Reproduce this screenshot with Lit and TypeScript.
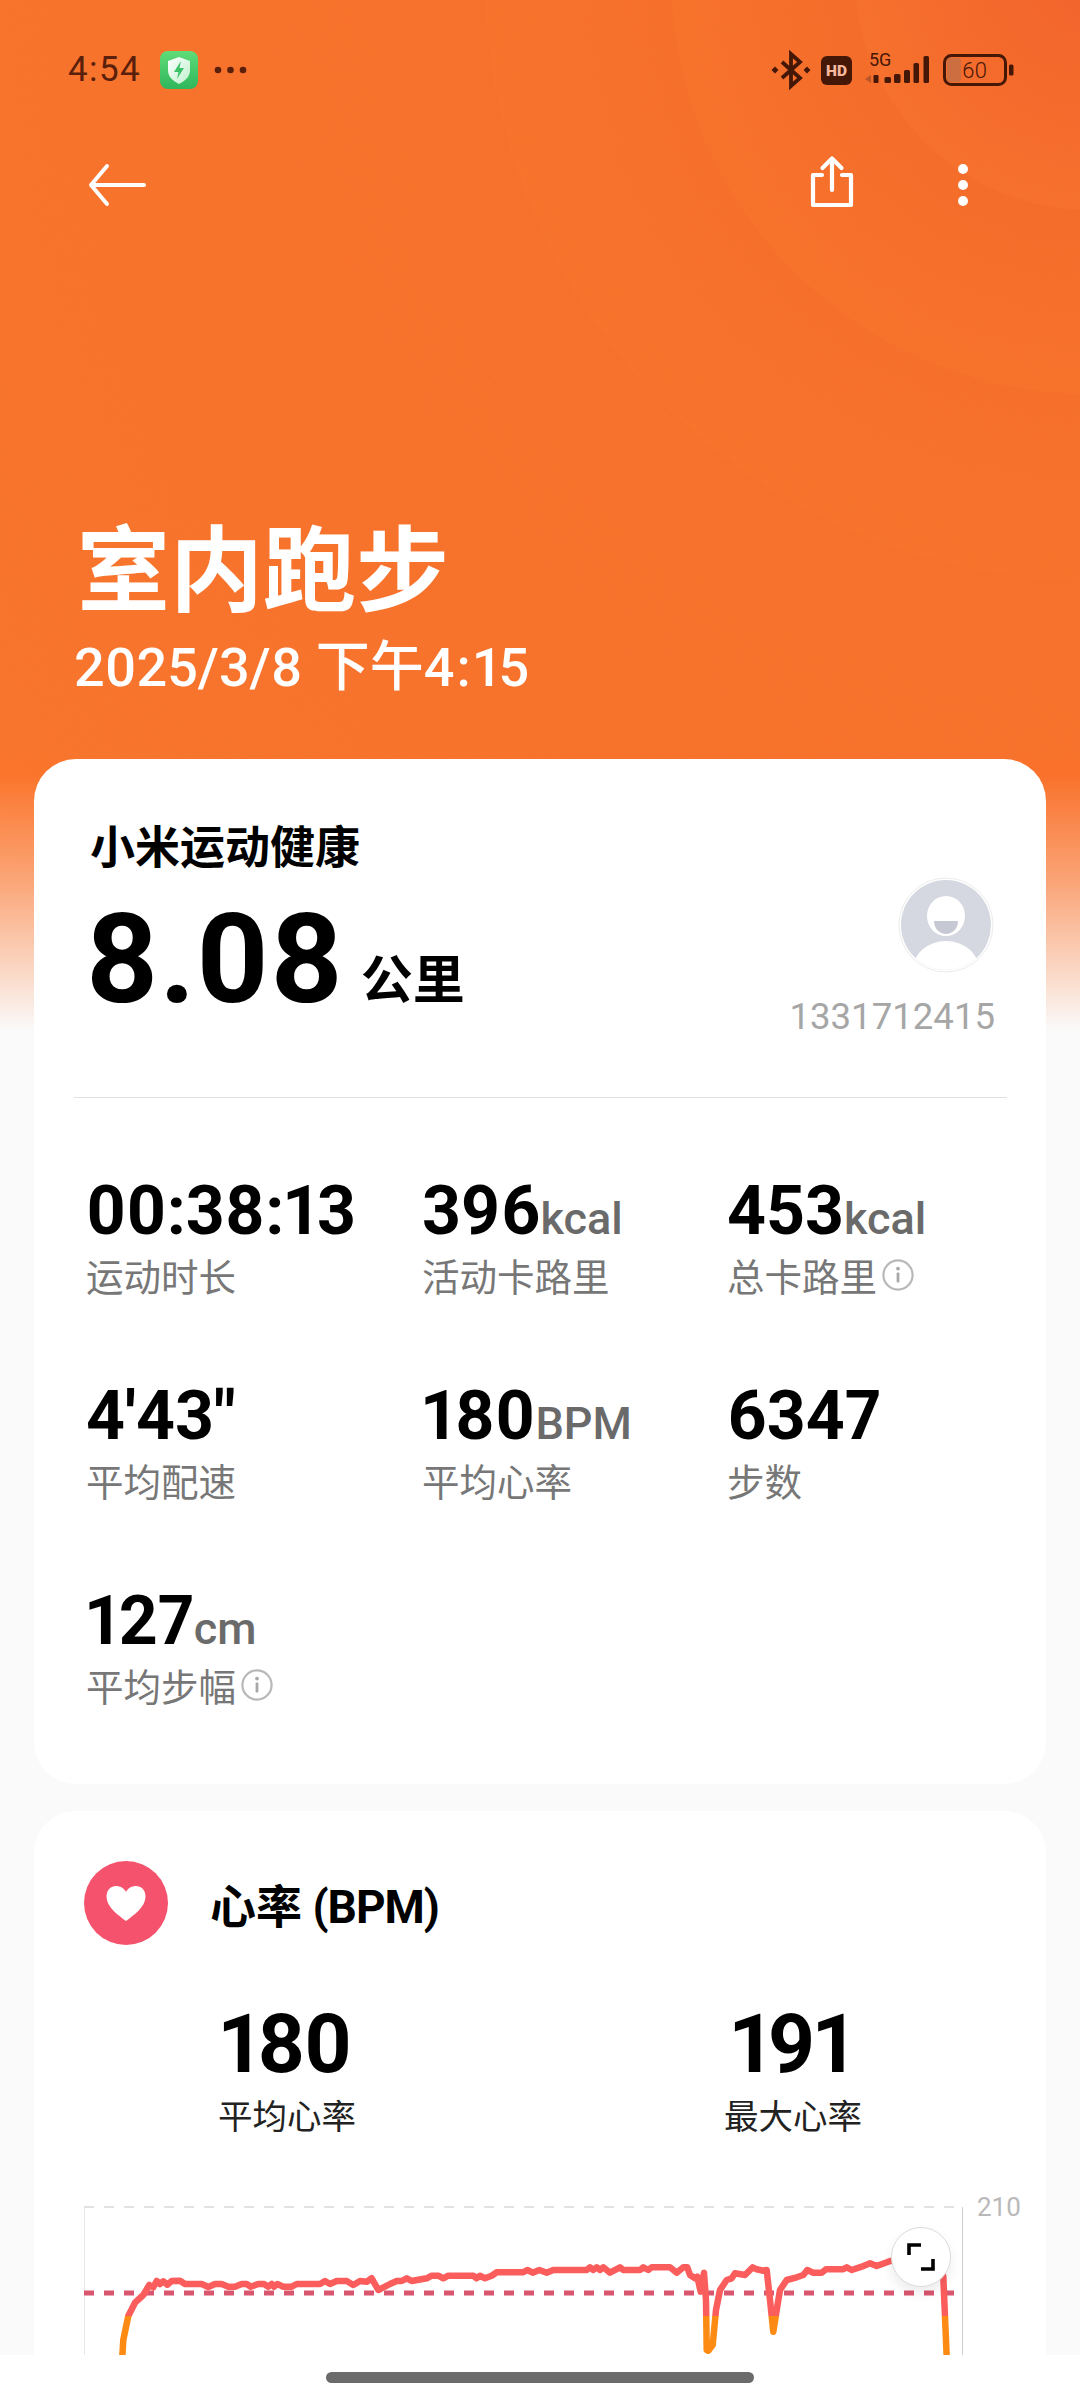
import { LitElement, html, css, svg, unsafeCSS } from "lit";
import { customElement } from "lit/decorators.js";

const z7: [number, number][] = [[187,530],[190,480],[205,408],[225,368],[250,345],[268,315],[280,322],[290,303],[300,312],[310,304],[322,314],[335,303],[360,302],[375,312],[425,312],[445,321],[465,312],[485,312],[505,320],[525,320],[545,312],[560,312],[572,320],[595,312],[612,312],[625,320],[635,312],[642,320],[652,312],[670,320],[695,320],[710,312],[780,312],[795,303],[810,312],[830,303],[860,303],[880,315],[900,303],[920,305],[935,295],[955,330],[975,320],[990,312],[1010,303],[1025,303],[1040,295],[1055,303],[1100,295],[1115,287],[1135,287],[1150,295],[1165,287],[1240,287],[1250,295],[1260,287],[1275,295],[1295,287],[1310,277],[1390,277],[1402,270],[1418,278],[1438,270],[1460,278],[1480,270]];
const z8: [number, number][] = [[0,270],[20,270],[30,262],[40,270],[50,262],[60,270],[70,262],[90,278],[120,262],[130,270],[180,270],[190,262],[205,270],[215,262],[270,262],[290,278],[310,262],[322,262],[330,285],[345,295],[352,290],[362,335],[372,278],[378,360],[380,510],[385,512],[398,495],[408,390],[420,330],[440,300],[455,295],[465,280],[495,285],[518,262],[530,268],[550,272],[560,270],[570,360],[580,455],[590,390],[600,330],[620,300],[650,292],[670,285],[682,270],[700,278],[725,278],[738,268],[790,268],[800,262],[815,270],[845,260],[870,250],[890,258],[925,245],[1000,225],[1085,270],[1090,290],[1100,530]];
const linePoints = [
  ...z7.map(([x, y]) => `${(60 + x / 3).toFixed(1)},${(2180 + y / 3).toFixed(1)}`),
  ...z8.map(([x, y]) => `${(580 + x / 3).toFixed(1)},${(2180 + y / 3).toFixed(1)}`),
].join(" ");

const noise = unsafeCSS(
  `url("data:image/svg+xml,%3Csvg xmlns='http://www.w3.org/2000/svg' width='240' height='240'%3E%3Cfilter id='n'%3E%3CfeTurbulence type='fractalNoise' baseFrequency='.9' numOctaves='2'/%3E%3CfeColorMatrix values='0 0 0 0 .45 0 0 0 0 .2 0 0 0 0 .05 0 0 0 .35 -.06'/%3E%3C/filter%3E%3Crect width='240' height='240' filter='url(%23n)' opacity='.35'/%3E%3C/svg%3E")`
);

const stats = [
  { v: "00:38:13", l: "运动时长" },
  { v: "396", u: "kcal", l: "活动卡路里" },
  { v: "453", u: "kcal", l: "总卡路里", info: true },
  { v: "4'43\"", l: "平均配速" },
  { v: "180", u: "BPM", l: "平均心率" },
  { v: "6347", l: "步数" },
  { v: "127", u: "cm", l: "平均步幅", info: true },
];

const infoIcon = html`<svg class="info" viewBox="0 0 32 32" aria-hidden="true">
  <circle cx="16" cy="16" r="14.6" fill="none" stroke="#b8b8b8" stroke-width="2.2" />
  <circle cx="16" cy="9.6" r="1.9" fill="#a8a8a8" />
  <rect x="14.6" y="13.5" width="2.8" height="10" rx="1" fill="#a8a8a8" />
</svg>`;

@customElement("app-root")
export class AppRoot extends LitElement {
  static styles = css`
    :host {
      display: block;
      font-family: Roboto, "Noto Sans CJK SC", sans-serif;
      font-variant-numeric: proportional-nums;
    }
    .page {
      width: 1080px;
      height: 2400px;
      display: flex;
      flex-direction: column;
      overflow: hidden;
      background-color: #fafafa;
      background-image:
        linear-gradient(180deg, rgba(250, 250, 250, 0) 775px, rgba(250, 250, 250, 0.36) 880px, rgba(250, 250, 250, 0.78) 980px, #fafafa 1030px),
        radial-gradient(
          circle at 1090px -25px,
          #f5622a 0,
          #f9702c 234px,
          #f76c29 236px,
          #fa722b 418px,
          #f86f2a 420px,
          #fa732c 604px,
          #f9712b 606px,
          #fa722b 900px,
          #fb752c 1400px
        );
      background-repeat: no-repeat;
      background-size: 100% 1030px;
    }
    .scroll {
      flex: 1;
      min-height: 0;
      overflow: hidden;
    }
    .home {
      height: 45px;
      flex: none;
      background: #fff;
      display: flex;
      justify-content: center;
      padding-top: 17px;
      box-sizing: border-box;
    }
    .home i {
      display: block;
      width: 428px;
      height: 11px;
      border-radius: 6px;
      background: #6b6b6b;
    }

    .header {
      height: 759px;
      box-sizing: border-box;
      padding-top: 50px;
      background-image: ${noise};
    }
    .status {
      height: 40px;
      display: flex;
      align-items: center;
      padding: 0 66px 0 68px;
      color: #5a200b;
    }
    .time {
      font-size: 35px;
      letter-spacing: 1.4px;
      line-height: 40px;
      width: 92px;
    }
    .shield {
      width: 38px;
      height: 38px;
      flex: none;
    }
    .more {
      width: 36px;
      height: 10px;
      margin-left: 15px;
      flex: none;
    }
    .status-right {
      margin-left: auto;
      display: flex;
      align-items: center;
    }
    .status-right svg {
      overflow: visible;
    }
    .bt {
      width: 38px;
      height: 38px;
      margin-right: 11px;
    }
    .hd {
      width: 31px;
      height: 29px;
      margin-right: 17px;
    }
    .sig {
      width: 70px;
      height: 34px;
      margin-right: 4px;
    }
    .bat {
      width: 71px;
      height: 32px;
    }
    .toolbar {
      height: 60px;
      margin-top: 65px;
      display: flex;
      align-items: center;
      padding: 0 111px 0 88px;
    }
    .back {
      width: 58px;
      height: 44px;
    }
    .share {
      width: 46px;
      height: 54px;
      margin-left: auto;
      margin-top: -8px;
    }
    .kebab {
      width: 12px;
      height: 46px;
      margin-left: 102px;
    }
    .title {
      margin: 299px 0 0 77px;
      font-size: 93px;
      line-height: 100px;
      font-weight: 700;
      color: #fff;
      font-family: "Noto Sans CJK SC", sans-serif;
    }
    .date {
      margin: 24px 0 0 74px;
      font-size: 54px;
      line-height: 60px;
      font-weight: 500;
      color: #fff;
    }
    .date span {
      padding: 0 3px 0 2px;
    }

    .card {
      width: 1012px;
      margin-left: 34px;
      background: #fff;
      border-radius: 42px;
      box-sizing: border-box;
    }
    .main {
      height: 1025px;
      padding-top: 56px;
    }
    .head {
      display: flex;
      justify-content: space-between;
      padding: 0 51px 0 56px;
    }
    .brand {
      font-size: 45px;
      line-height: 60px;
      font-weight: 700;
      color: #000;
      font-family: "Noto Sans CJK SC", sans-serif;
    }
    .dist {
      margin: 22px 0 0 -5px;
      font-size: 125px;
      line-height: 125px;
      font-weight: 700;
      color: #000;
      white-space: nowrap;
    }
    .dist span {
      font-size: 52px;
      margin-left: 17px;
      line-height: 0;
      vertical-align: 3px;
      font-family: "Noto Sans CJK SC", sans-serif;
    }
    .who {
      padding-top: 62px;
      display: flex;
      flex-direction: column;
      align-items: flex-end;
    }
    .avatar {
      width: 96px;
      height: 96px;
      margin-right: 1px;
    }
    .uid {
      margin-top: 22px;
      font-size: 36.6px;
      line-height: 44px;
      color: #a6a6a6;
      font-variant-numeric: tabular-nums;
    }
    .rule {
      height: 1px;
      margin: 58px 39px 0 40px;
      background: #e0e0e0;
    }
    .grid {
      display: grid;
      grid-template-columns: 336px 305px 1fr;
      row-gap: 85px;
      padding: 79px 0 0 52px;
    }
    .val {
      font-size: 68px;
      line-height: 68px;
      font-weight: 700;
      color: #000;
      white-space: nowrap;
    }
    .val span {
      font-size: 45px;
      line-height: 0;
      font-weight: 500;
      color: #6a6a6a;
    }
    .lab {
      margin-top: 8px;
      font-size: 37.5px;
      line-height: 44px;
      color: #777;
      display: flex;
      align-items: center;
      font-family: "Noto Sans CJK SC", sans-serif;
    }
    .info {
      width: 32px;
      height: 32px;
      margin-left: 5px;
    }

    .hr {
      margin-top: 27px;
      height: 620px;
      padding-top: 50px;
    }
    .hr-head {
      display: flex;
      align-items: center;
      padding-left: 50px;
      gap: 42px;
    }
    .heart {
      width: 84px;
      height: 84px;
      flex: none;
    }
    .hr-title {
      height: 84px;
      font-size: 46px;
      line-height: 84px;
      font-weight: 700;
      color: #000;
      font-family: "Noto Sans CJK SC", sans-serif;
    }
    .hr-title span {
      font-family: Roboto, sans-serif;
      line-height: 0;
      letter-spacing: -1px;
    }
    .hr-vals {
      display: grid;
      grid-template-columns: 1fr 1fr;
      margin-top: 58px;
      text-align: center;
    }
    .big {
      font-size: 82px;
      line-height: 82px;
      font-weight: 700;
      letter-spacing: -2px;
      padding-right: 4px;
      color: #000;
    }
    .cap {
      margin-top: 9px;
      font-size: 34.5px;
      line-height: 40px;
      color: #222;
      font-family: "Noto Sans CJK SC", sans-serif;
    }
    .chart {
      position: relative;
      margin-top: 56px;
      height: 200px;
    }
    .chart > svg {
      display: block;
      width: 1012px;
      height: 200px;
    }
    .tick {
      font: 400 26px Roboto, sans-serif;
      fill: #b9b9b9;
    }
    .expand {
      position: absolute;
      left: 857px;
      top: 37px;
      width: 60px;
      height: 60px;
      border-radius: 50%;
      background: #fff;
      border: 1px solid #dcdcdc;
      box-sizing: border-box;
      box-shadow: 0 6px 12px rgba(0, 0, 0, 0.08);
      display: flex;
      align-items: center;
      justify-content: center;
    }
    .expand svg {
      width: 30px;
      height: 30px;
    }
  `;

  private chart() {
    return svg`
      <defs>
        <linearGradient id="hrLine" gradientUnits="userSpaceOnUse" x1="0" y1="2200" x2="0" y2="2400">
          <stop offset="0.58" stop-color="#fb5c5c" />
          <stop offset="0.58" stop-color="#fd8a12" />
        </linearGradient>
      </defs>
      <line x1="84.5" y1="2207" x2="84.5" y2="2400" stroke="#e6e6e6" stroke-width="1" />
      <line x1="962.5" y1="2207" x2="962.5" y2="2400" stroke="#cfcfcf" stroke-width="1" />
      <line x1="84" y1="2207" x2="962" y2="2207" stroke="#d9d9d9" stroke-width="1.5" stroke-dasharray="10 10" />
      <line x1="84" y1="2293" x2="955" y2="2293" stroke="#d9566f" stroke-width="5" stroke-dasharray="10 10" />
      <polyline points=${linePoints} fill="none" stroke="url(#hrLine)" stroke-width="6.5" stroke-linejoin="round" />
      <text class="tick" x="977" y="2216">210</text>
    `;
  }

  render() {
    return html`
      <div class="page">
        <div class="scroll">
          <header class="header">
            <div class="status">
              <span class="time">4:54</span>
              <svg class="shield" viewBox="0 0 38 38" aria-hidden="true">
                <defs>
                  <linearGradient id="g1" x1="0" y1="0" x2="0" y2="1">
                    <stop offset="0" stop-color="#5fdc78" />
                    <stop offset="1" stop-color="#2fb65c" />
                  </linearGradient>
                  <linearGradient id="g2" x1="0" y1="0" x2="1" y2="1">
                    <stop offset="0" stop-color="#ffffff" />
                    <stop offset="1" stop-color="#bdf0cc" />
                  </linearGradient>
                </defs>
                <rect width="38" height="38" rx="8" fill="url(#g1)" />
                <path d="M19 6 L30 10 V19 C30 26 25 30 19 33 C13 30 8 26 8 19 V10 Z" fill="url(#g2)" />
                <path d="M21 10 L14 21 H18.5 L17 28 L24 17 H19.5 Z" fill="#3cc169" />
              </svg>
              <svg class="more" viewBox="0 0 36 10" aria-hidden="true">
                <circle cx="5" cy="5" r="3.3" fill="#5a200b" />
                <circle cx="17.5" cy="5" r="3.3" fill="#5a200b" />
                <circle cx="30" cy="5" r="3.3" fill="#5a200b" />
              </svg>
              <div class="status-right">
                <svg class="bt" viewBox="0 0 38 38" aria-hidden="true">
                  <path d="M10 11 L28 27 L19 35 V3 L28 11 L10 27" fill="none" stroke="#451707" stroke-width="3.8" />
                  <path d="M3 15.5 L6.5 19 L3 22.5 L-.5 19 Z M35 15.5 L38.5 19 L35 22.5 L31.5 19 Z" fill="#451707" />
                </svg>
                <svg class="hd" viewBox="0 0 31 29" aria-hidden="true">
                  <rect width="31" height="29" rx="6" fill="#451707" />
                  <text x="15.5" y="20" text-anchor="middle" font-family="Roboto, sans-serif" font-size="15.5" font-weight="900" fill="#f6b79c">HD</text>
                </svg>
                <svg class="sig" viewBox="0 0 70 34" aria-hidden="true">
                  <text x="0" y="13" font-family="Roboto, sans-serif" font-size="18" fill="#451707">5G</text>
                  <path d="M-4 26 l6 -4 v8 z" fill="#b8562a" />
                  <rect x="4.500" y="22" width="5" height="8" rx="1" fill="#451707" />
                  <rect x="15.500" y="24" width="6.500" height="6" rx="1.500" fill="#451707" />
                  <rect x="25" y="21" width="6.500" height="9" rx="1.500" fill="#451707" />
                  <rect x="35" y="17" width="6" height="13" rx="1.500" fill="#451707" />
                  <rect x="44.500" y="10" width="5.500" height="20" rx="1.500" fill="#451707" />
                  <rect x="54.500" y="3" width="5.500" height="27" rx="1.500" fill="#451707" />
                </svg>
                <svg class="bat" viewBox="0 0 71 32" aria-hidden="true">
                  <rect x="4" y="4" width="14" height="24" rx="3" fill="#cc6e40" />
                  <rect x="1.5" y="1.5" width="61" height="29" rx="7" fill="none" stroke="#451707" stroke-width="3" />
                  <rect x="66" y="10.5" width="4.5" height="11" rx="1.5" fill="#451707" />
                  <text x="31.5" y="24" text-anchor="middle" font-family="Roboto, sans-serif" font-size="22" font-weight="300" fill="#451707">60</text>
                </svg>
              </div>
            </div>
            <div class="toolbar">
              <svg class="back" viewBox="0 0 58 44" aria-hidden="true">
                <path d="M56 22 H4 M19 3 L3 22 L19 41" fill="none" stroke="#fff" stroke-width="4" stroke-linecap="round" stroke-linejoin="round" />
              </svg>
              <svg class="share" viewBox="0 0 46 54" aria-hidden="true">
                <path d="M13 21 H4 V51 H42 V21 H33" fill="none" stroke="#fff" stroke-width="4.2" stroke-linecap="round" stroke-linejoin="round" />
                <path d="M23 36 V5 M13.5 14 L23 4.5 L32.5 14" fill="none" stroke="#fff" stroke-width="4.2" stroke-linecap="round" stroke-linejoin="round" />
              </svg>
              <svg class="kebab" viewBox="0 0 12 46" aria-hidden="true">
                <circle cx="6" cy="7" r="5" fill="#fff" />
                <circle cx="6" cy="23" r="5" fill="#fff" />
                <circle cx="6" cy="39" r="5" fill="#fff" />
              </svg>
            </div>
            <div class="title">室内跑步</div>
            <div class="date">2025/3/8 下午4<span>:</span>15</div>
          </header>

          <section class="card main">
            <div class="head">
              <div>
                <div class="brand">小米运动健康</div>
                <div class="dist">8.08<span>公里</span></div>
              </div>
              <div class="who">
                <svg class="avatar" viewBox="0 0 96 96" aria-hidden="true">
                  <defs>
                    <clipPath id="av"><circle cx="48" cy="48" r="45" /></clipPath>
                  </defs>
                  <circle cx="48" cy="48" r="47" fill="none" stroke="#ececec" stroke-width="1" />
                  <circle cx="48" cy="48" r="45" fill="#d6d8e1" />
                  <g clip-path="url(#av)">
                    <ellipse cx="48" cy="39" rx="19" ry="20" fill="#fff" />
                    <path d="M36 44 H60 C60 52 54 57 48 57 C42 57 36 52 36 44 Z" fill="#c6c8d3" />
                    <ellipse cx="48" cy="92" rx="33" ry="28" fill="#fff" />
                  </g>
                </svg>
                <div class="uid">1331712415</div>
              </div>
            </div>
            <div class="rule"></div>
            <div class="grid">
              ${stats.map(
                (s) => html`<div>
                  <div class="val">${s.v}${s.u ? html`<span>${s.u}</span>` : ""}</div>
                  <div class="lab">${s.l}${s.info ? infoIcon : ""}</div>
                </div>`
              )}
            </div>
          </section>

          <section class="card hr">
            <div class="hr-head">
              <svg class="heart" viewBox="0 0 84 84" aria-hidden="true">
                <circle cx="42" cy="42" r="42" fill="#f5536d" />
                <path d="M42 60 C34 54 22.500 46 22.500 35.500 C22.500 29 27 25 32 25 C36 25 40 27 42 31 C44 27 48 25 52 25 C57 25 61.500 29 61.500 35.500 C61.500 46 50 54 42 60 Z" fill="#fff" />
              </svg>
              <div class="hr-title">心率 <span>(BPM)</span></div>
            </div>
            <div class="hr-vals">
              <div><div class="big">180</div><div class="cap">平均心率</div></div>
              <div><div class="big">191</div><div class="cap">最大心率</div></div>
            </div>
            <div class="chart">
              <svg viewBox="34 2190 1012 200">${this.chart()}</svg>
              <div class="expand">
                <svg viewBox="0 0 30 30" aria-hidden="true">
                  <path d="M3 13 V3 H15 M27 17 V27 H15" fill="none" stroke="#000" stroke-width="3.6" />
                </svg>
              </div>
            </div>
          </section>
        </div>
        <div class="home"><i></i></div>
      </div>
    `;
  }
}
